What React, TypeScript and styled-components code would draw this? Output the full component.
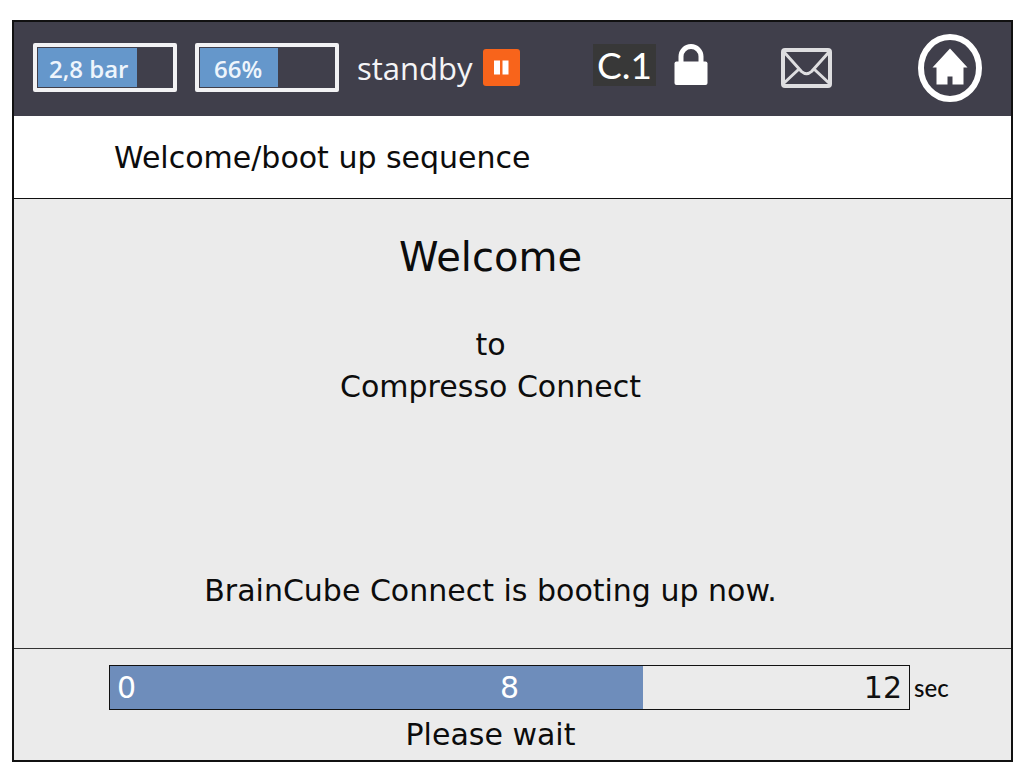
import React from 'react';
import styled, { createGlobalStyle } from 'styled-components';

const GlobalStyle = createGlobalStyle`
  * { box-sizing: border-box; }
  body {
    margin: 0;
    background: #fff;
    color: #0c0c0c;
    font-family: "DejaVu Sans", Verdana, sans-serif;
    font-size: 30px;
    line-height: 42px;
  }
`;

const Screen = styled.div`
  display: flex;
  flex-direction: column;
  min-height: calc(100vh - 34px);
  margin: 20px 11px 14px 12px;
  border: 2px solid #111;
  background: #ebebeb;
`;

const StatusBar = styled.header`
  display: flex;
  align-items: center;
  justify-content: space-between;
  height: 94px;
  padding: 0 29px 3px 19px;
  background: #403f4b;
  color: #f4f4f6;
`;

const StatusGroup = styled.div<{ $gap: number; $raise?: number }>`
  display: flex;
  align-items: center;
  gap: ${(p) => p.$gap}px;
  padding-bottom: ${(p) => p.$raise ?? 0}px;
`;

const Gauge = styled.div`
  display: grid;
  width: 144px;
  height: 49px;
  padding: 1px;
  border: 4px solid #f2f2f4;
  border-radius: 2px;
`;

const GaugeFill = styled.div`
  grid-area: 1 / 1;
  background: #6597cb;
`;

const GaugeValue = styled.span<{ $inset: number }>`
  grid-area: 1 / 1;
  align-self: center;
  padding: 2px 0 0 ${(p) => p.$inset}px;
  font-family: "Open Sans", sans-serif;
  font-size: 24px;
  font-weight: 600;
  line-height: 32px;
  color: #eef5fc;
`;

const Mode = styled.span`
  font-family: "Open Sans", sans-serif;
  font-size: 31px;
  font-weight: 400;
`;

const IconButton = styled.button<{ $before?: number }>`
  display: block;
  padding: 0 0 0 ${(p) => p.$before ?? 0}px;
  border: 0;
  background: none;
  cursor: pointer;

  svg { display: block; }
`;

const AccessCode = styled.span`
  padding: 0 4px;
  background: #383838;
  color: #fff;
  font-family: Lato, sans-serif;
  font-size: 37px;
`;

const TitleBar = styled.div`
  padding: 21px 100px 19px;
  border-bottom: 1px solid #111;
  background: #fff;
`;

const Title = styled.h1`
  margin: 0;
  font-size: 30px;
  font-weight: 400;
`;

const Main = styled.main`
  display: flex;
  flex: 1;
  flex-direction: column;
  padding: 34px 44px 36px 0;
  text-align: center;
`;

const Greeting = styled.h2`
  margin: 0 0 43px;
  font-size: 40px;
  font-weight: 400;
  line-height: 48px;
`;

const Line = styled.p`
  margin: 0;
`;

const BootMessage = styled.p`
  margin: auto 0 0;
`;

const Footer = styled.footer`
  padding: 16px 0 4px 95px;
  border-top: 1px solid #333;
`;

const ProgressRow = styled.div`
  display: flex;
  align-items: center;
`;

const Progress = styled.div`
  display: grid;
  flex: 1;
  height: 45px;
  border: 1px solid #111;
`;

const ProgressFill = styled.div`
  grid-area: 1 / 1;
  background: #6e8dbb;
`;

const Ticks = styled.div`
  grid-area: 1 / 1;
  display: grid;
  grid-template-columns: 1fr auto 1fr;
  align-items: end;
  padding: 0 7px;
`;

const Tick = styled.span<{ $reached?: boolean; $end?: boolean }>`
  color: ${(p) => (p.$reached ? '#fff' : '#111')};
  text-align: ${(p) => (p.$end ? 'right' : 'left')};
`;

const Unit = styled.span`
  width: 101px;
  padding-left: 4px;
  font-family: Lato, sans-serif;
  font-size: 24px;
  font-weight: 500;
`;

const WaitMessage = styled.p`
  margin: 4px 0 0;
  padding-right: 139px;
  text-align: center;
`;

const PauseIcon = () => (
  <svg width="37" height="37" viewBox="0 0 37 37" aria-hidden="true">
    <rect width="37" height="37" rx="3" fill="#f8641b" />
    <path d="M11 11.500h6v14h-6zM19.500 11.500h6v14h-6z" fill="#fff" />
  </svg>
);

const LockIcon = () => (
  <svg width="34" height="42" viewBox="0 0 34 42" role="img" aria-label="Locked">
    <path d="M7 20V12.500a10 10 0 0 1 20 0V20" fill="none" stroke="#fff" strokeWidth="5" />
    <rect x="0.500" y="17.500" width="33" height="23.500" rx="2" fill="#fff" />
  </svg>
);

const MailIcon = () => (
  <svg width="51" height="40" viewBox="0 0 51 40" fill="none" stroke="#dedee0" strokeLinejoin="round" aria-hidden="true">
    <rect x="2" y="2" width="47" height="36" rx="2" strokeWidth="4" />
    <path d="M3 4L20.500 23.500Q25.500 28 30.500 23.500L48 4M3 35L17.500 21.500M48 35L33.500 21.500" strokeWidth="3" />
  </svg>
);

const HomeIcon = () => (
  <svg width="64" height="68" viewBox="0 0 64 68" aria-hidden="true">
    <ellipse cx="32" cy="34" rx="29" ry="31" fill="none" stroke="#fff" strokeWidth="6" />
    <path d="M32 14.500L49.500 33.500H45.500V50.500H34.500V42.500H29.500V50.500H18.500V33.500H14.500Z" fill="#fff" />
  </svg>
);

const boot = { elapsed: 8, total: 12 };

export default function App() {
  return (
    <>
      <GlobalStyle />
      <Screen>
        <StatusBar>
          <StatusGroup $gap={18}>
            <Gauge>
              <GaugeFill style={{ width: '74%' }} />
              <GaugeValue $inset={11}>2,8 bar</GaugeValue>
            </Gauge>
            <Gauge>
              <GaugeFill style={{ width: '58%' }} />
              <GaugeValue $inset={14}>66%</GaugeValue>
            </Gauge>
            <StatusGroup $gap={10}>
              <Mode>standby</Mode>
              <IconButton type="button" aria-label="Pause">
                <PauseIcon />
              </IconButton>
            </StatusGroup>
          </StatusGroup>
          <StatusGroup $gap={18} $raise={5}>
            <AccessCode>C.1</AccessCode>
            <LockIcon />
          </StatusGroup>
          <IconButton type="button" aria-label="Messages">
            <MailIcon />
          </IconButton>
          <IconButton type="button" aria-label="Home" $before={12}>
            <HomeIcon />
          </IconButton>
        </StatusBar>
        <TitleBar>
          <Title>Welcome/boot up sequence</Title>
        </TitleBar>
        <Main>
          <Greeting>Welcome</Greeting>
          <Line>to</Line>
          <Line>Compresso Connect</Line>
          <BootMessage>BrainCube Connect is booting up now.</BootMessage>
        </Main>
        <Footer>
          <ProgressRow>
            <Progress
              role="progressbar"
              aria-label="Boot progress"
              aria-valuemin={0}
              aria-valuemax={boot.total}
              aria-valuenow={boot.elapsed}
            >
              <ProgressFill style={{ width: `${(boot.elapsed / boot.total) * 100}%` }} />
              <Ticks>
                <Tick $reached>0</Tick>
                <Tick $reached>{boot.elapsed}</Tick>
                <Tick $end>{boot.total}</Tick>
              </Ticks>
            </Progress>
            <Unit>sec</Unit>
          </ProgressRow>
          <WaitMessage>Please wait</WaitMessage>
        </Footer>
      </Screen>
    </>
  );
}
